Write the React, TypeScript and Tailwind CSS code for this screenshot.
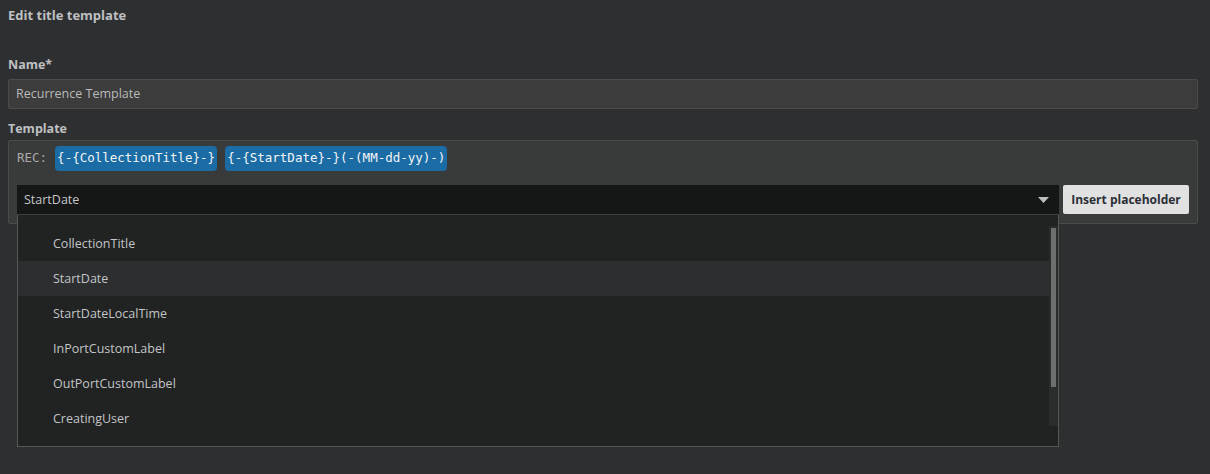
const items = [
  "CollectionTitle",
  "StartDate",
  "StartDateLocalTime",
  "InPortCustomLabel",
  "OutPortCustomLabel",
  "CreatingUser",
];

export default function App() {
  return (
    <div
      className="w-[1210px] h-[474px] bg-[#2e2f31] px-2 text-[#c6c7c8] overflow-hidden"
      style={{ fontFamily: '"Open Sans", "Noto Sans", sans-serif' }}
    >
      <h1 className="pt-[6px] text-[13px] leading-[18px] font-bold text-[#bfc0c1]">Edit title template</h1>

      <label className="block mt-[32px] text-[12.5px] leading-[18px] font-bold text-[#bfc0c1]">Name*</label>
      <div className="mt-[5px] w-[1190px] h-[30px] flex items-center px-[7px] pt-[1px] bg-[#3b3c3b] border border-[#4a4b4a] rounded-[2px] text-[12.5px] text-[#b9baba]">
        Recurrence Template
      </div>

      <label className="block mt-[11px] text-[12.5px] leading-[18px] font-bold text-[#bfc0c1]">Template</label>
      <div className="mt-[2px] w-[1190px] bg-[#393a3a] border border-[#4a4b4a] rounded-[2px] px-[8px] pt-[5px] pb-[8px]">
        <div
          className="flex items-center h-[25px] text-[12.5px] text-[#a9abac]"
          style={{ fontFamily: '"DejaVu Sans Mono", "Liberation Mono", monospace' }}
        >
          <span className="mr-[8px]">REC:</span>
          <span className="h-[25px] flex items-center px-[2px] rounded-[4px] bg-[#1b6ca5] text-[#f2f4f6]">{"{-{CollectionTitle}-}"}</span>
          <span className="ml-[8px] h-[25px] flex items-center px-[2px] rounded-[4px] bg-[#1b6ca5] text-[#f2f4f6]">{"{-{StartDate}-}(-(MM-dd-yy)-)"}</span>
        </div>

        <div className="mt-[14px] flex gap-[4px]">
          <div className="relative w-[1042px]">
            <div className="h-[30px] flex items-center justify-between pl-[7px] pr-[10px] pt-[1px] bg-[#151616] border-b border-[#3e3f3f] text-[12.5px] text-[#c6c7c8]">
              <span>StartDate</span>
              <svg width="11" height="6" viewBox="0 0 11 6">
                <path d="M0 0 H11 L5.5 6 Z" fill="#bdbebe" />
              </svg>
            </div>
            <div className="absolute left-0 top-[30px] z-10 w-[1042px] h-[232px] bg-[#212222] border border-t-0 border-[#555656] pt-[11px]">
              <div className="flex">
                <ul className="flex-1">
                  {items.map((it) => (
                    <li
                      key={it}
                      className={`h-[35px] flex items-center pl-[35px] pt-[2px] text-[12.5px] text-[#c3c5c7] ${
                        it === "StartDate" ? "bg-[#2d2e30]" : ""
                      }`}
                    >
                      {it}
                    </li>
                  ))}
                </ul>
                <div className="w-[9px] h-[200px] bg-[#2b2c2c] pt-[2px] pl-[2px]">
                  <div className="w-[5px] h-[159px] bg-[#6d6e6e]" />
                </div>
              </div>
            </div>
          </div>
          <button className="h-[29px] w-[126px] bg-[#e1e1e1] rounded-[2px] text-[12px] font-bold text-[#2b2f36]">
            Insert placeholder
          </button>
        </div>
      </div>
    </div>
  );
}
